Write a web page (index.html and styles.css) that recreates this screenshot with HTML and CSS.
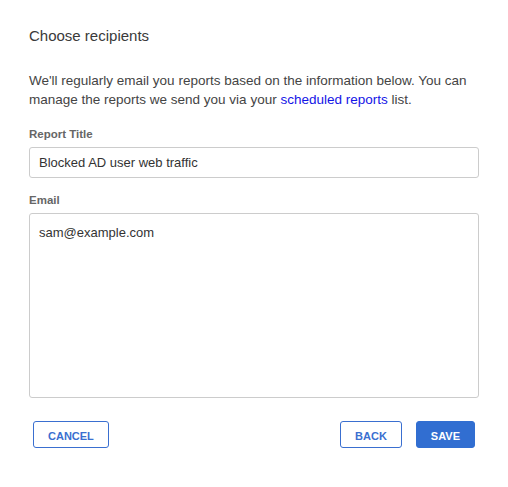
FILE: index.html
```html
<!DOCTYPE html>
<html lang="en">
<head>
  <meta charset="UTF-8">
  <title>Choose recipients</title>
  <link rel="stylesheet" href="styles.css">
</head>
<body>
<div class="dialog">
  <h2 class="title">Choose recipients</h2>
  <p class="intro">We'll regularly email you reports based on the information below. You can manage the reports we send you via your <a href="#">scheduled reports</a> list.</p>

  <label class="field-label" for="reportTitle">Report Title</label>
  <input class="field" id="reportTitle" type="text" value="Blocked AD user web traffic">

  <label class="field-label" for="emails">Email</label>
  <textarea class="field area" id="emails">sam@example.com</textarea>

  <div class="actions">
    <button class="btn">CANCEL</button>
    <div class="right">
      <button class="btn">BACK</button>
      <button class="btn primary">SAVE</button>
    </div>
  </div>
</div>
</body>
</html>
```

FILE: styles.css
```css
body {
  font-family: "Liberation Sans", Arial, sans-serif;
  background: #fff;
  color: #444;
  margin: 0;
}
.dialog {
  padding: 26px 29px 0 29px;
}
.title {
  font-size: 15px;
  font-weight: normal;
  color: #3a3a3a;
  margin: 0 0 25px 0;
  line-height: 20px;
}
.intro {
  font-size: 13.5px;
  line-height: 19px;
  margin: 0 0 18px 0;
  color: #444;
}
.intro a { color: #1414e6; text-decoration: none; }
.field-label {
  display: block;
  font-size: 11.5px;
  font-weight: bold;
  color: #666;
  margin-bottom: 6px;
  line-height: 14px;
}
.field {
  display: block;
  box-sizing: border-box;
  width: 100%;
  height: 31px;
  border: 1px solid #ccc;
  border-radius: 3px;
  padding: 0 9px;
  font-family: inherit;
  font-size: 13px;
  color: #333;
  margin: 0 0 15px 0;
}
.area {
  height: 185px;
  margin-top: 1px;
  padding: 11px 9px;
  resize: none;
  line-height: 16px;
  margin-bottom: 23px;
}
.actions {
  display: flex;
  justify-content: space-between;
  padding: 0 4px;
}
.right { display: flex; gap: 14px; }
.btn {
  height: 27px;
  padding: 3px 14px 0 14px;
  border: 1px solid #3a6fd0;
  border-radius: 3px;
  background: #fff;
  color: #3a6fd0;
  font-family: inherit;
  font-size: 11px;
  font-weight: bold;
}
.btn.primary { background: #316ed1; color: #fff; border-color: #316ed1; }
```
